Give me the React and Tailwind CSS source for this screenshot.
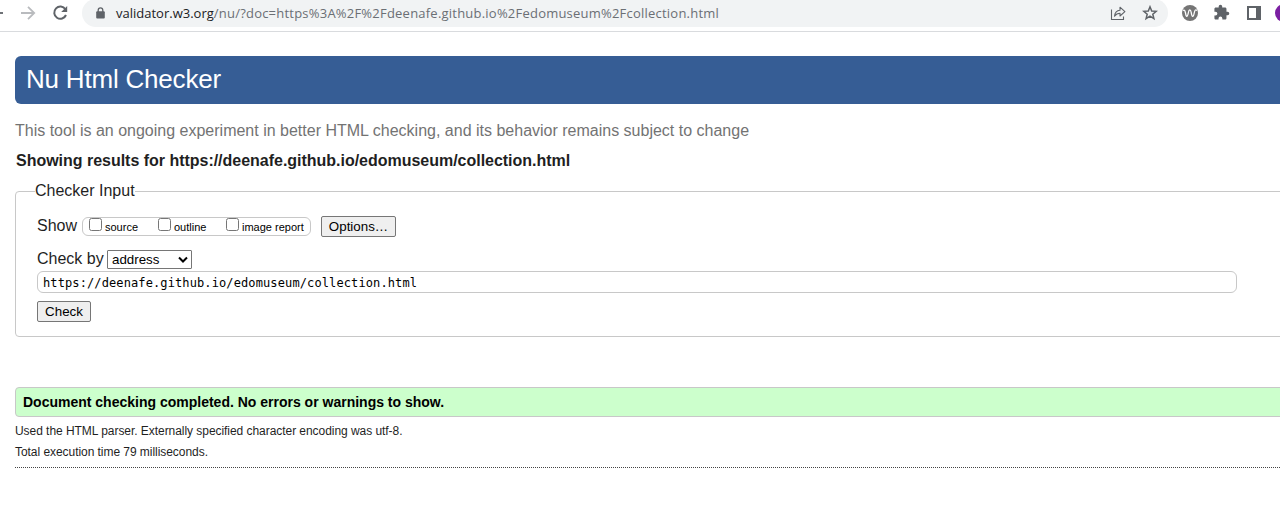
import React from "react";

function Toolbar() {
  return (
    <header className="flex h-8 items-start overflow-hidden border-b border-[#d9dbde] bg-white">
      <div className="flex h-[27px] w-[82px] shrink-0 items-center">
        <svg className="h-[27px] w-[82px]" viewBox="0 0 82 27" fill="none">
          <path d="M-8 13H3" stroke="#5f6368" strokeWidth="1.8" />
          <path d="M21 13H34M28 6.8L34.2 13L28 19.2" stroke="#b9bbbe" strokeWidth="1.8" />
          <path d="M65.400 9.200A6.100 6.100 0 1 0 66 15" stroke="#5f6368" strokeWidth="2" />
          <path d="M67.200 6V12H61.200Z" fill="#5f6368" />
        </svg>
      </div>
      <div className="-mt-px flex h-7 w-[1086px] shrink-0 items-center rounded-full bg-[#f1f3f4] pl-[14px]">
        <svg className="h-3 w-[9px] shrink-0" viewBox="0 0 9 12">
          <path d="M2.2 5V3.2a2.3 2.3 0 0 1 4.6 0V5" fill="none" stroke="#5f6368" strokeWidth="1.3" />
          <rect x="0.2" y="4.2" width="8.6" height="7.4" rx="1" fill="#5f6368" />
        </svg>
        <span className="ml-[11px] flex-1 whitespace-nowrap font-['Open_Sans','Noto_Sans',sans-serif] text-[13px] leading-7 text-[#6b6f74]">
          <span className="text-[#202124]">validator.w3.org</span>
          <span className="tracking-[0.22px]">/nu/?doc=https%3A%2F%2Fdeenafe.github.io%2Fedomuseum%2Fcollection.html</span>
        </span>
        <svg className="mr-4 h-4 w-4" viewBox="0 0 16 16" fill="none" stroke="#5f6368" strokeWidth="1.1">
          <path d="M1.500 4.500V14.500H13.500V11.500" />
          <path d="M4.500 11.200C4.900 7.400 7 5.400 10 5.200V2.200L14.900 6.700L10 11V8.200C7.500 8.200 6 9.100 4.500 11.200Z" strokeLinejoin="round" />
        </svg>
        <svg className="mr-[10px] h-4 w-4" viewBox="0 0 16 16" fill="none" stroke="#5f6368" strokeWidth="1.5">
          <path d="M8 1.8L9.7 6L14.2 6.3L10.8 9.2L11.9 13.6L8 11.2L4.1 13.6L5.2 9.2L1.8 6.3L6.3 6Z" />
        </svg>
      </div>
      <div className="flex h-[26px] shrink-0 items-center">
        <svg className="ml-[14px] h-4 w-4" viewBox="0 0 16 16">
          <circle cx="8" cy="8" r="8" fill="#757575" />
          <path d="M0.8 5.5C2.8 4.2 3 6 3.6 8.400C4.200 12.600 5.500 12.300 6.400 7.500C7 4.200 8.500 4 9.200 7.400C10 12.500 11.300 12.700 12.200 8C12.800 5.200 13.500 4 15.100 5.600" fill="none" stroke="#fff" strokeWidth="1.3" />
        </svg>
        <svg className="-mt-px ml-[15px] h-[17px] w-[17px]" viewBox="0 0 24 24" fill="#5f6368">
          <path d="M20.500 11H19V7c0-1.100-.9-2-2-2h-4V3.500a2.500 2.500 0 0 0-5 0V5H4c-1.100 0-2 .9-2 2v3.800h1.500a2.700 2.700 0 0 1 0 5.400H2V20c0 1.100.9 2 2 2h3.800v-1.500a2.700 2.700 0 0 1 5.400 0V22H17c1.100 0 2-.9 2-2v-4h1.500a2.500 2.500 0 0 0 0-5z" />
        </svg>
        <svg className="ml-[17px] h-[14px] w-[14px]" viewBox="0 0 14 14">
          <path fillRule="evenodd" d="M0 0H14V14H0ZM2 2V12H9V2Z" fill="#5f6368" />
        </svg>
        <span className="ml-[14px] h-[18px] w-[18px] rounded-full bg-[#7b1fa2]" />
      </div>
    </header>
  );
}

function Option({ label, className }) {
  return (
    <label className={"flex h-[18px] items-start " + className}>
      <input type="checkbox" className="h-[13px] w-[13px] shrink-0" />
      <span className="ml-[3px] whitespace-nowrap text-[11px] leading-[19px] text-black">{label}</span>
    </label>
  );
}

export default function App() {
  return (
    <div className="h-[509px] w-[1280px] overflow-hidden bg-white font-['Liberation_Sans',Arial,sans-serif] text-[#1f1f1f]">
      <Toolbar />
      <main className="flex w-[1300px] flex-col pl-[15px] pt-6">
        <h1 className="h-12 rounded-[6px] bg-[#365d95] pl-[11px] text-[26px] leading-[46px] text-white">
          <span className="tracking-[-0.2px]">Nu Html Checker</span>
        </h1>
        <p className="mt-[17px] h-5 whitespace-nowrap text-base leading-5 text-[#737373]">
          This tool is an ongoing experiment in better HTML checking, and its behavior remains subject to change
        </p>
        <h2 className="mt-[10px] h-5 whitespace-nowrap pl-px text-base font-bold leading-5 tracking-[-0.02px]">
          Showing results for https://deenafe.github.io/edomuseum/collection.html
        </h2>
        <fieldset className="mt-[10px] h-[156px] rounded-[4px] border border-[#c8c8c8] pl-[21px]">
          <legend className="-ml-[2px] h-5 text-base leading-5">Checker Input</legend>
          <div className="mt-[14px] flex h-[22px] items-center">
            <span className="w-[45px] text-base leading-5">Show</span>
            <div className="flex h-[19px] w-[229px] items-start rounded-[6px] border border-[#c8c8c8] pl-[6px]">
              <Option label="source" className="w-[69px]" />
              <Option label="outline" className="w-[68px]" />
              <Option label="image report" className="w-[84px]" />
            </div>
            <button className="ml-[10px] h-[21px] w-[75px] rounded-[2px] border border-[#767676] bg-[#efefef] text-[13.33px] leading-[19px] text-black">Options…</button>
          </div>
          <div className="mt-3 flex h-[21px] items-center">
            <span className="w-[70px] whitespace-nowrap pb-[2px] text-base leading-5">Check by</span>
            <div className="relative">
              <select className="block h-[19px] w-[85px] appearance-none rounded-[1px] border border-[#767676] bg-white pl-1 text-[13.33px] leading-[17px] text-black">
                <option>address</option>
              </select>
              <svg className="pointer-events-none absolute right-[4px] top-[6px] h-2 w-[10px]" viewBox="0 0 10 8" fill="none">
                <path d="M1 1.500L5 5.500L9 1.500" stroke="#000" strokeWidth="2" />
              </svg>
            </div>
          </div>
          <input
            className="mt-px block h-[22px] w-[1200px] rounded-[6px] border border-[#c8c8c8] pl-[5px] pt-[2px] font-['DejaVu_Sans_Mono',monospace] text-[12px] tracking-[0.11px] text-black"
            defaultValue="https://deenafe.github.io/edomuseum/collection.html"
          />
          <button className="mt-2 block h-[21px] w-[54px] rounded-[2px] border border-[#767676] bg-[#efefef] text-[13.33px] leading-[19px] text-black">Check</button>
        </fieldset>
        <p className="mt-[50px] h-[30px] rounded-[4px] border border-[#c8c8c8] bg-[#ccffcc] pl-[7px] text-sm font-bold leading-7 text-black">
          Document checking completed. No errors or warnings to show.
        </p>
        <p className="mt-1 h-[21px] text-[12px] leading-[21px] tracking-[-0.05px]">
          Used the HTML parser. Externally specified character encoding was utf-8.
        </p>
        <p className="h-[21px] text-[12px] leading-[21px] tracking-[-0.05px]">
          Total execution time 79 milliseconds.
        </p>
        <hr className="mt-1 border-0 border-t border-dotted border-[#444]" />
      </main>
    </div>
  );
}
